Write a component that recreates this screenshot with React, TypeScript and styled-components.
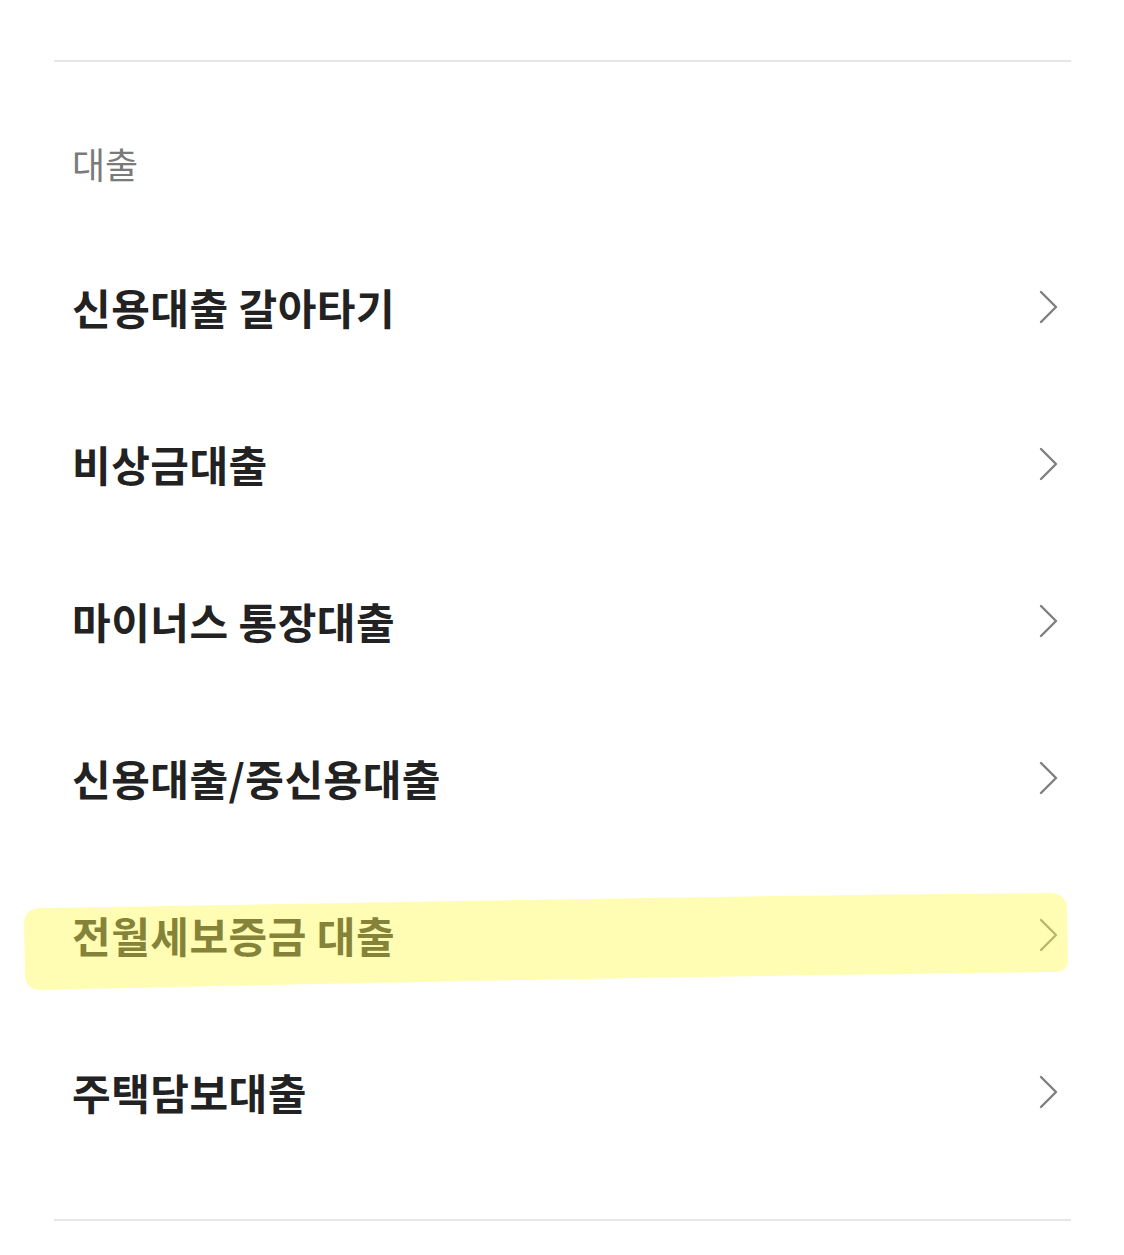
import styled, { createGlobalStyle } from 'styled-components';

const GlobalStyle = createGlobalStyle`
    body {
        margin: 0;
        background: #FFFFFF;
        font-family: 'Noto Sans CJK KR', 'Noto Sans', sans-serif;
    }
`

const Page = styled.div`
    position: relative;
    width: 1124px;
    padding: 60px 53px 0 54px;
    box-sizing: border-box;
`

const Section = styled.section`
    border-top: 2px solid #E6E6E6;
    border-bottom: 2px solid #E6E6E6;
    padding-bottom: 49px;
`

const SectionTitle = styled.h2`
    margin: 0;
    padding: 76px 0 40px 18px;
    font-size: 36px;
    line-height: 50px;
    font-weight: 400;
    color: #7A7A7A;
`

const List = styled.ul`
    list-style: none;
    margin: 0;
    padding: 0;
`

const Row = styled.li`
    height: 157px;
    padding: 0 13px 0 18px;
    display: flex;
    align-items: center;
    justify-content: space-between;
    cursor: pointer;
`

const Label = styled.span`
    font-size: 42px;
    font-weight: 700;
    color: #222222;
    letter-spacing: 0.5px;
`

const Chevron = styled.svg`
    width: 20px;
    height: 36px;
    flex: none;
`

// yellow highlighter stroke drawn over the page
const Highlight = styled.svg`
    position: absolute;
    left: 0;
    top: 880px;
    width: 1124px;
    height: 120px;
    pointer-events: none;
`

const items = [
    '신용대출 갈아타기',
    '비상금대출',
    '마이너스 통장대출',
    '신용대출/중신용대출',
    '전월세보증금 대출',
    '주택담보대출',
]

export default function App() {
    return (
        <Page>
            <GlobalStyle />
            <Section>
                <SectionTitle>대출</SectionTitle>
                <List>
                    {items.map((item) => (
                        <Row key={item}>
                            <Label>{item}</Label>
                            <Chevron viewBox="0 0 20 36">
                                <polyline points="3,3 18,18 3,33" fill="none" stroke="#7F7F7F" strokeWidth="2.4" strokeLinecap="round" strokeLinejoin="round" />
                            </Chevron>
                        </Row>
                    ))}
                </List>
            </Section>
            <Highlight viewBox="0 0 1124 120">
                <path
                    d="M40 28 C 300 24, 700 16, 1050 13 Q 1066 13 1067 28 L 1068 80 Q 1068 92 1054 92 C 700 96, 300 104, 42 110 Q 26 110 25 96 L 24 44 Q 24 29 40 28 Z"
                    fill="rgb(255, 250, 88)"
                    fillOpacity="0.45"
                />
            </Highlight>
        </Page>
    )
}
